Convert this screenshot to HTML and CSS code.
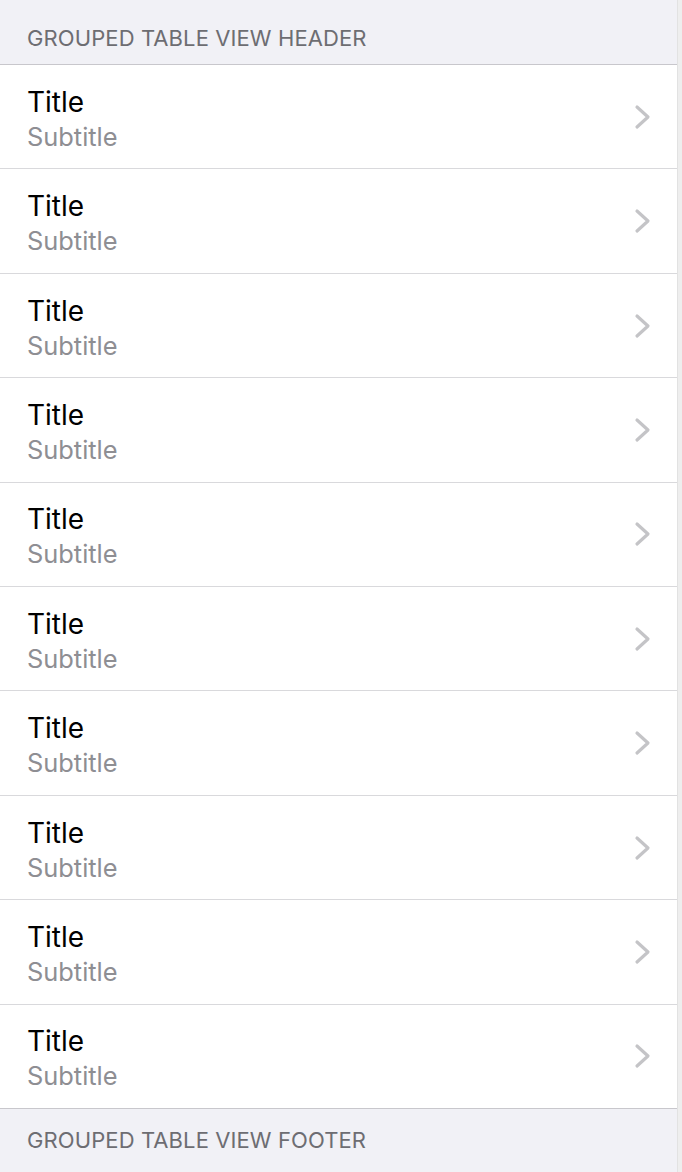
FILE: index.html
```html
<!DOCTYPE html>
<html lang="en">
<head>
<meta charset="utf-8">
<title>Grouped Table View</title>
<link rel="stylesheet" href="styles.css">
</head>
<body>
<div class="page">
  <main class="table">
    <header class="section-header">GROUPED TABLE VIEW HEADER</header>
    <ul class="rows">
      <li class="row"><div class="texts"><span class="title">Title</span><span class="subtitle">Subtitle</span></div><svg class="chevron" viewBox="0 0 17 26"><path d="M3 3 L14 13 L3 23"/></svg></li>
      <li class="row"><div class="texts"><span class="title">Title</span><span class="subtitle">Subtitle</span></div><svg class="chevron" viewBox="0 0 17 26"><path d="M3 3 L14 13 L3 23"/></svg></li>
      <li class="row"><div class="texts"><span class="title">Title</span><span class="subtitle">Subtitle</span></div><svg class="chevron" viewBox="0 0 17 26"><path d="M3 3 L14 13 L3 23"/></svg></li>
      <li class="row"><div class="texts"><span class="title">Title</span><span class="subtitle">Subtitle</span></div><svg class="chevron" viewBox="0 0 17 26"><path d="M3 3 L14 13 L3 23"/></svg></li>
      <li class="row"><div class="texts"><span class="title">Title</span><span class="subtitle">Subtitle</span></div><svg class="chevron" viewBox="0 0 17 26"><path d="M3 3 L14 13 L3 23"/></svg></li>
      <li class="row"><div class="texts"><span class="title">Title</span><span class="subtitle">Subtitle</span></div><svg class="chevron" viewBox="0 0 17 26"><path d="M3 3 L14 13 L3 23"/></svg></li>
      <li class="row"><div class="texts"><span class="title">Title</span><span class="subtitle">Subtitle</span></div><svg class="chevron" viewBox="0 0 17 26"><path d="M3 3 L14 13 L3 23"/></svg></li>
      <li class="row"><div class="texts"><span class="title">Title</span><span class="subtitle">Subtitle</span></div><svg class="chevron" viewBox="0 0 17 26"><path d="M3 3 L14 13 L3 23"/></svg></li>
      <li class="row"><div class="texts"><span class="title">Title</span><span class="subtitle">Subtitle</span></div><svg class="chevron" viewBox="0 0 17 26"><path d="M3 3 L14 13 L3 23"/></svg></li>
      <li class="row"><div class="texts"><span class="title">Title</span><span class="subtitle">Subtitle</span></div><svg class="chevron" viewBox="0 0 17 26"><path d="M3 3 L14 13 L3 23"/></svg></li>
    </ul>
    <footer class="section-footer">GROUPED TABLE VIEW FOOTER</footer>
  </main>
  <div class="scroll-track"></div>
</div>
</body>
</html>
```

FILE: styles.css
```css
html, body {
  margin: 0;
  padding: 0;
  background: #efeff4;
}

body {
  font-family: Inter, "Noto Sans", "Liberation Sans", sans-serif;
  -webkit-font-smoothing: antialiased;
}

.page {
  display: flex;
  width: 682px;
  height: 1172px;
  overflow: hidden;
}

.table {
  flex: 1;
  display: flex;
  flex-direction: column;
  background: #f1f1f6;
}

.section-header {
  height: 65px;
  box-sizing: border-box;
  padding: 25px 0 0 27px;
  font-size: 22px;
  line-height: 26px;
  color: #6d6d72;
  letter-spacing: 0.1px;
  border-bottom: 1px solid #c8c7cc;
  flex: none;
}

.rows {
  list-style: none;
  margin: 0;
  padding: 0;
  background: #ffffff;
  display: flex;
  flex-direction: column;
  height: 1043px;
  border-bottom: 1px solid #c8c7cc;
  flex: none;
}

.row {
  flex: 1;
  display: flex;
  align-items: center;
  padding: 0 26px 0 27px;
  border-bottom: 1px solid #d9d9dc;
}

.row:last-child {
  border-bottom: none;
}

.texts {
  flex: 1;
  display: flex;
  flex-direction: column;
  padding-top: 6px;
}

.title {
  font-size: 28px;
  line-height: 34px;
  color: #000000;
}

.subtitle {
  font-size: 25.4px;
  line-height: 36px;
  color: #8e8e93;
}

.chevron {
  width: 17px;
  height: 26px;
  flex: none;
}

.chevron path {
  fill: none;
  stroke: #c4c4c7;
  stroke-width: 3.2;
  stroke-linecap: round;
  stroke-linejoin: round;
}

.section-footer {
  padding: 18px 0 0 27px;
  font-size: 22px;
  line-height: 26px;
  color: #6d6d72;
  letter-spacing: 0.1px;
}

.scroll-track {
  width: 4px;
  flex: none;
  background: #eeeeee;
  border-left: 1px solid #e2e2e2;
}
```
